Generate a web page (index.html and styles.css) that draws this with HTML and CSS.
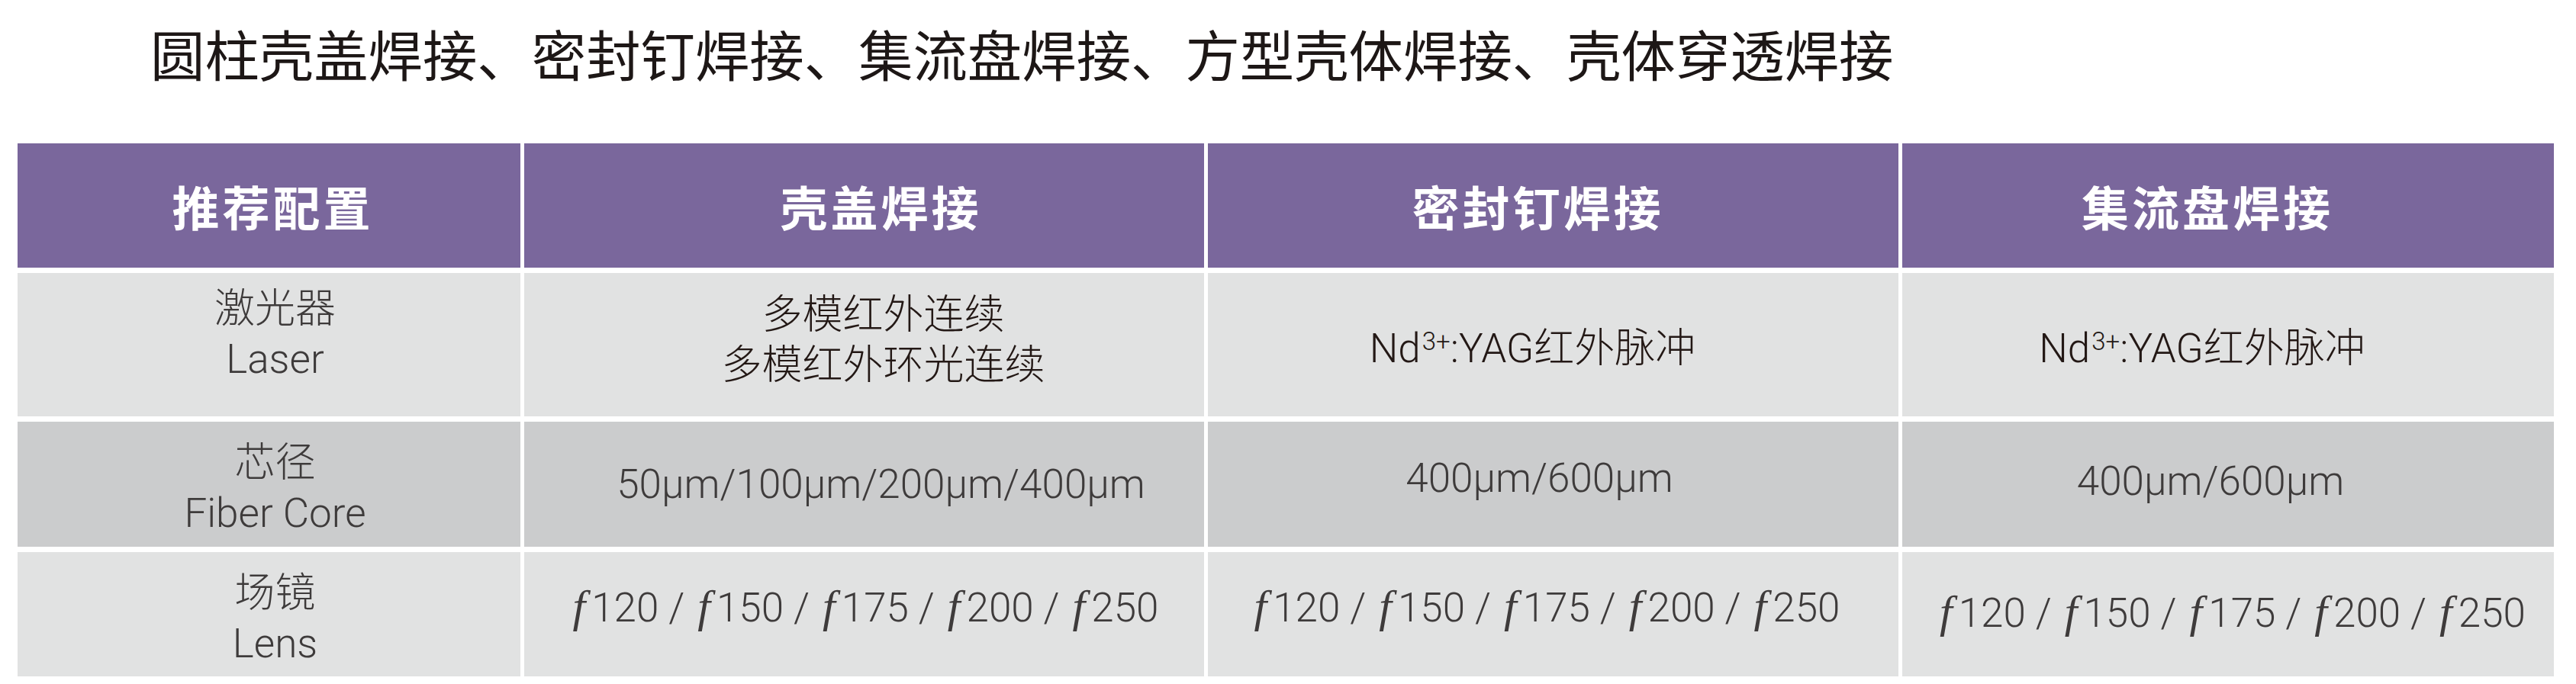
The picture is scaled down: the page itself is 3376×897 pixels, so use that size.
FILE: index.html
```html
<!DOCTYPE html>
<html lang="zh-CN">
<head>
<meta charset="utf-8">
<title>推荐配置</title>
<link rel="stylesheet" href="styles.css">
</head>
<body>
<h1 class="title">圆柱壳盖焊接、密封钉焊接、集流盘焊接、方型壳体焊接、壳体穿透焊接</h1>
<div class="spec">
  <div class="cell head c1 h">推荐配置</div>
  <div class="cell head c2 h">壳盖焊接</div>
  <div class="cell head c3 h">密封钉焊接</div>
  <div class="cell head c4 h">集流盘焊接</div>

  <div class="cell txt light c1 r1"><span>激光器</span><span>Laser</span></div>
  <div class="cell txt light ink c2 r1"><span>多模红外连续</span><span>多模红外环光连续</span></div>
  <div class="cell txt light ink c3 r1"><span>Nd<sup class="sup">3+</sup>:YAG红外脉冲</span></div>
  <div class="cell txt light ink c4 r1"><span>Nd<sup class="sup">3+</sup>:YAG红外脉冲</span></div>

  <div class="cell txt dark c1 r2"><span>芯径</span><span>Fiber Core</span></div>
  <div class="cell txt dark c2 r2"><span>50µm/100µm/200µm/400µm</span></div>
  <div class="cell txt dark c3 r2"><span>400µm/600µm</span></div>
  <div class="cell txt dark c4 r2"><span>400µm/600µm</span></div>

  <div class="cell txt light c1 r3"><span>场镜</span><span>Lens</span></div>
  <div class="cell txt light c2 r3"><span><i class="fn">f</i>120 / <i class="fn">f</i>150 / <i class="fn">f</i>175 / <i class="fn">f</i>200 / <i class="fn">f</i>250</span></div>
  <div class="cell txt light c3 r3"><span><i class="fn">f</i>120 / <i class="fn">f</i>150 / <i class="fn">f</i>175 / <i class="fn">f</i>200 / <i class="fn">f</i>250</span></div>
  <div class="cell txt light c4 r3"><span><i class="fn">f</i>120 / <i class="fn">f</i>150 / <i class="fn">f</i>175 / <i class="fn">f</i>200 / <i class="fn">f</i>250</span></div>
</div>
</body>
</html>
```
FILE: styles.css
```css
html, body {
  margin: 0;
  padding: 0;
  background: #ffffff;
}

body {
  font-family: Roboto, "Noto Sans CJK SC", sans-serif;
}

.title {
  margin: 34px 0 0 197px;
  font-family: "Noto Sans CJK SC", sans-serif;
  font-weight: 400;
  font-size: 71.4px;
  line-height: 71px;
  color: #1d1716;
  white-space: nowrap;
}

.spec {
  display: grid;
  grid-template-columns: 659px 891px 905px 854px;
  grid-template-rows: 163px 188px 164px 163px;
  gap: 7px 5px;
  margin: 83px 0 0 23px;
  width: max-content;
}

.cell {
  display: flex;
  flex-direction: column;
  align-items: center;
  justify-content: center;
  text-align: center;
  box-sizing: border-box;
  white-space: nowrap;
}

.head {
  background: #7a679c;
  color: #ffffff;
  font-family: "Noto Sans CJK SC", sans-serif;
  font-weight: 700;
  font-size: 62px;
  line-height: 1;
  letter-spacing: 4px;
}

.txt {
  font-family: Roboto, "Noto Sans CJK SC", sans-serif;
  font-weight: 300;
  font-size: 53px;
  line-height: 66px;
  color: #3e3b3b;
}

.light { background: #e1e2e2; }
.dark { background: #cbcccd; }
.ink { color: #231815; }

.sup {
  font-size: 33px;
  line-height: 0;
  vertical-align: 16px;
  margin-left: 2px;
}

.fn {
  font-family: "Liberation Serif", serif;
  font-style: italic;
  font-weight: 400;
  font-size: 60px;
  margin: 0 8px 0 4px;
}

/* header offsets */
.h.c1 { padding-left: 10px; }
.h.c2 { padding-left: 44px; }
.h.c3 { padding-right: 40px; }
.h.c4 { padding-right: 54px; }

/* row 1 */
.r1.c1 { padding: 0 0 28px 16px; }
.r1.c2 { padding: 0 0 13px 50px; }
.r1.c3 { padding: 10px 54px 0 0; }
.r1.c4 { padding: 10px 68px 0 0; }

/* row 2 */
.r2.c1 { padding: 9px 0 0 16px; }
.r2.c2 { padding: 0 0 0 44px; }
.r2.c3 { padding: 0 36px 16px 0; }
.r2.c4 { padding: 0 46px 8px 0; }

/* row 3 */
.r3.c1 { padding: 10px 0 0 16px; }
.r3.c2 { padding: 0 0 20px 0; }
.r3.c3 { padding: 0 20px 20px 0; }
.r3.c4 { padding: 0 0 6px 8px; }
```
